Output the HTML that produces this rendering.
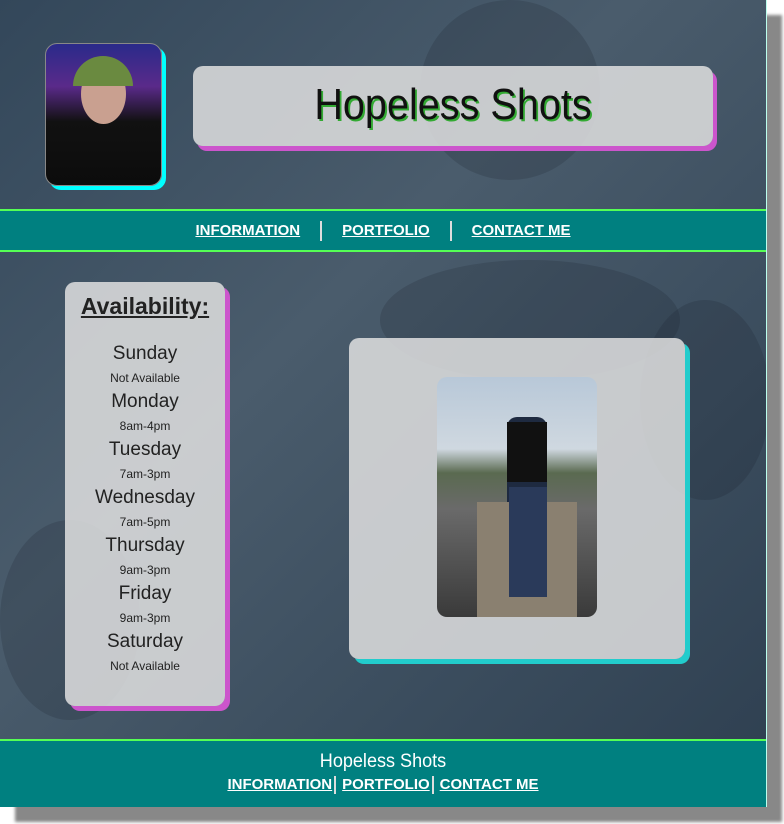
<!DOCTYPE html>
<html><head><style>
body{margin:0;width:784px;height:824px;background:#fff;position:relative;overflow:hidden;font-family:"Liberation Sans",sans-serif}
#page{position:absolute;left:0;top:0;width:766px;height:807px;box-shadow:15px 15px 3px #888;background:linear-gradient(135deg,#33475a,#4a5c6c 40%,#3b4d5e 70%,#2e3f50);border-right:1px solid #bfe;overflow:hidden}
.blob{position:absolute;border-radius:50%;background:rgba(20,30,40,.18)}
.nav{position:absolute;left:0;width:766px;background:#008080;border-top:2px solid #5f5;border-bottom:2px solid #5f5;color:#fff;text-align:center}
.nav a{color:#fff;font-weight:bold;text-decoration:underline;font-size:15px}
.sep{display:inline-block;width:2px;height:20px;background:#ddd;vertical-align:middle;margin:0 20px}
.card{position:absolute;background:rgba(225,225,225,.85);border-radius:10px}
.day{font-size:19px;color:#222;line-height:26px}
.hr{font-size:12px;color:#222;line-height:22px}
</style></head><body>
<div id="page">
<div class="blob" style="left:420px;top:0;width:180px;height:180px"></div>
<div class="blob" style="left:380px;top:260px;width:300px;height:120px"></div>
<div class="blob" style="left:0;top:520px;width:140px;height:200px"></div>
<div class="blob" style="left:640px;top:300px;width:130px;height:200px"></div>
<div style="position:absolute;left:45px;top:43px;width:115px;height:141px;border-radius:12px;background:linear-gradient(180deg,#2a2a8a,#5a2a8a 30%,#111 55%,#0c0c0c);box-shadow:4px 4px 0 #0ff;border:1px solid #888;overflow:hidden">
<div style="position:absolute;left:35px;top:20px;width:45px;height:60px;border-radius:50%;background:#c9a090"></div>
<div style="position:absolute;left:27px;top:12px;width:60px;height:30px;border-radius:30px 30px 0 0;background:#6a8a40"></div>
</div>
<div class="card" style="left:193px;top:66px;width:520px;height:80px;box-shadow:4px 5px 0 #c5c;text-align:center">
<div style="font-size:44px;line-height:78px;color:#111;text-shadow:2px 2px 0 #3a3;transform:scaleX(0.9)">Hopeless Shots</div></div>
<div class="nav" style="top:209px;height:39px;line-height:39px"><a>INFORMATION</a><span class="sep"></span><a>PORTFOLIO</a><span class="sep"></span><a>CONTACT ME</a></div>
<div class="card" style="left:65px;top:282px;width:160px;height:424px;box-shadow:5px 5px 0 #c5c;text-align:center">
<div style="font-size:23px;font-weight:bold;text-decoration:underline;color:#222;margin-top:10px;line-height:28px;margin-bottom:21px">Availability:</div>
<div class="day">Sunday</div><div class="hr">Not Available</div>
<div class="day">Monday</div><div class="hr">8am-4pm</div>
<div class="day">Tuesday</div><div class="hr">7am-3pm</div>
<div class="day">Wednesday</div><div class="hr">7am-5pm</div>
<div class="day">Thursday</div><div class="hr">9am-3pm</div>
<div class="day">Friday</div><div class="hr">9am-3pm</div>
<div class="day">Saturday</div><div class="hr">Not Available</div>
</div>
<div class="card" style="left:349px;top:338px;width:336px;height:321px;box-shadow:5px 5px 0 #2cc">
<div style="position:absolute;left:88px;top:39px;width:160px;height:240px;border-radius:10px;overflow:hidden;background:linear-gradient(180deg,#b8c8d8 0,#cfd8e0 30%,#5a6a50 40%,#6a6a6a 55%,#3a3a3a 100%)">
<div style="position:absolute;left:70px;top:40px;width:40px;height:170px;background:#1e2a40;border-radius:10px"></div>
<div style="position:absolute;left:40px;top:125px;width:100px;height:115px;background:#8a8070"></div>
<div style="position:absolute;left:70px;top:45px;width:40px;height:60px;background:#111"></div>
<div style="position:absolute;left:72px;top:110px;width:38px;height:110px;background:#2a3a5a"></div>
</div></div>
<div class="nav" style="top:739px;height:68px;border-bottom:0;">
<div style="font-size:19px;margin-top:9px;line-height:24px;transform:scaleX(0.95)">Hopeless Shots</div>
<div style="line-height:22px"><a>INFORMATION</a><span style="display:inline-block;width:2px;height:18px;background:#ddd;vertical-align:middle;margin:0 6px 0 2px"></span><a>PORTFOLIO</a><span style="display:inline-block;width:2px;height:18px;background:#ddd;vertical-align:middle;margin:0 6px 0 2px"></span><a>CONTACT ME</a></div>
</div>
</div>
</body></html>
